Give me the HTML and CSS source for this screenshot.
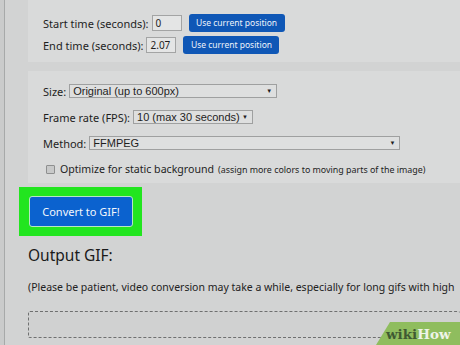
FILE: index.html
```html
<!DOCTYPE html>
<html>
<head>
<meta charset="utf-8">
<link rel="stylesheet" href="styles.css">
</head>
<body>
<div class="edge"></div>
<div class="frame">
  <div class="panel panel-time">
    <div class="row">
      <span class="label">Start time (seconds):</span>
      <span class="input w30">0</span>
      <span class="btn-small">Use current position</span>
    </div>
    <div class="row">
      <span class="label">End time (seconds):</span>
      <span class="input w30">2.07</span>
      <span class="btn-small">Use current position</span>
    </div>
  </div>

  <div class="panel panel-opts">
    <div class="row">
      <span class="label">Size:</span>
      <span class="select w208"><span>Original (up to 600px)</span><span class="arrow">▼</span></span>
    </div>
    <div class="row">
      <span class="label">Frame rate (FPS):</span>
      <span class="select w120"><span>10 (max 30 seconds)</span><span class="arrow">▼</span></span>
    </div>
    <div class="row">
      <span class="label">Method:</span>
      <span class="select w311"><span>FFMPEG</span><span class="arrow">▼</span></span>
    </div>
    <div class="row check-row">
      <span class="checkbox"></span>
      <span class="check-label">Optimize for static background</span>
      <span class="check-note">(assign more colors to moving parts of the image)</span>
    </div>
  </div>

  <div class="highlight">
    <div class="btn-convert">Convert to GIF!</div>
  </div>

  <h2 class="title">Output GIF:</h2>
  <p class="note">(Please be patient, video conversion may take a while, especially for long gifs with high</p>
  <div class="dropzone"></div>
</div>

<div class="logo"><span class="logo-wiki">wiki</span><span class="logo-how">How</span></div>
</body>
</html>
```

FILE: styles.css
```css
html, body {
  margin: 0;
  padding: 0;
  width: 460px;
  height: 345px;
  overflow: hidden;
  background: #d2d3d3;
  font-family: "Noto Sans", "Open Sans", sans-serif;
  color: #1e1e1e;
  position: relative;
}

.edge {
  position: absolute;
  left: 0;
  top: 0;
  width: 4px;
  height: 345px;
  background: #cacbcb;
}

.frame {
  margin-left: 4px;
  border-left: 1px solid #a7a9a9;
  padding-left: 23px;
  height: 345px;
  box-sizing: border-box;
}

.panel {
  background: #d9dada;
  padding-left: 15px;
  display: flex;
  flex-direction: column;
}

.panel-time {
  padding-top: 14px;
  padding-bottom: 8px;
  gap: 4px;
}

.panel-opts {
  margin-top: 9px;
  padding-top: 13px;
  padding-bottom: 7px;
  gap: 12px;
}

.row {
  display: flex;
  align-items: center;
  height: 18px;
  font-size: 11px;
  white-space: nowrap;
}

.panel-opts .row {
  height: 14px;
}

.label {
  margin-right: 3px;
}

.input {
  box-sizing: border-box;
  height: 16px;
  border: 1px solid #a3a4a4;
  background: #e4e5e5;
  font-size: 10px;
  line-height: 14px;
  padding-left: 3px;
  margin-right: 7px;
}

.w30 { width: 30px; }

.btn-small {
  box-sizing: border-box;
  height: 18px;
  width: 96px;
  background: #0f57b6;
  border-radius: 3px;
  color: #eef3fa;
  font-size: 8.5px;
  line-height: 18px;
  text-align: center;
}

.select {
  box-sizing: border-box;
  height: 14px;
  border: 1px solid #9fa0a0;
  background: #dedfdf;
  font-family: "Liberation Sans", Arial, sans-serif;
  font-size: 11px;
  line-height: 12px;
  padding-left: 3px;
  padding-right: 4px;
  display: flex;
  justify-content: space-between;
  align-items: center;
}

.arrow {
  font-size: 6px;
}

.w208 { width: 208px; }
.w120 { width: 120px; }
.w311 { width: 311px; }

.check-row {
  padding-left: 3px;
}

.checkbox {
  box-sizing: border-box;
  width: 9px;
  height: 9px;
  border: 1px solid #8e8f8f;
  background: #c8c9c9;
  border-radius: 1px;
  margin-right: 5px;
}

.check-label {
  font-size: 10.6px;
  margin-right: 4px;
}

.check-note {
  font-size: 8.9px;
}

.highlight {
  margin-top: 4px;
  margin-left: -9px;
  width: 123px;
  height: 49px;
  box-sizing: border-box;
  padding: 9px 0 0 10px;
  background: #22e51f;
}

.btn-convert {
  box-sizing: border-box;
  width: 104px;
  height: 31px;
  background: #0b62cf;
  border: 1px solid #b7e6c4;
  border-radius: 3px;
  color: #f3f7fc;
  font-size: 11px;
  line-height: 29px;
  text-align: center;
}

.title {
  margin: 6px 0 0 0;
  font-size: 15.5px;
  font-weight: normal;
  line-height: 26px;
  color: #1a1a1a;
}

.note {
  margin: 12px 0 0 0;
  font-size: 10.5px;
  line-height: 14px;
  white-space: nowrap;
  color: #222;
}

.dropzone {
  margin-top: 17px;
  height: 27px;
  box-sizing: border-box;
  border: 1px dashed #6f7070;
  border-right: none;
  border-radius: 2px;
  background: #d0d1d1;
}

.logo {
  position: absolute;
  right: 0;
  bottom: 0;
  width: 84px;
  height: 23px;
  background: #8fbd5e;
  clip-path: polygon(14px 0, 100% 0, 100% 100%, 0 100%);
  font-family: "DejaVu Serif", "Liberation Serif", serif;
  font-weight: bold;
  font-size: 13.5px;
  line-height: 25px;
  padding-left: 10px;
  box-sizing: border-box;
}

.logo-wiki { color: #3f5a32; }
.logo-how { color: #eef4e8; }
```
